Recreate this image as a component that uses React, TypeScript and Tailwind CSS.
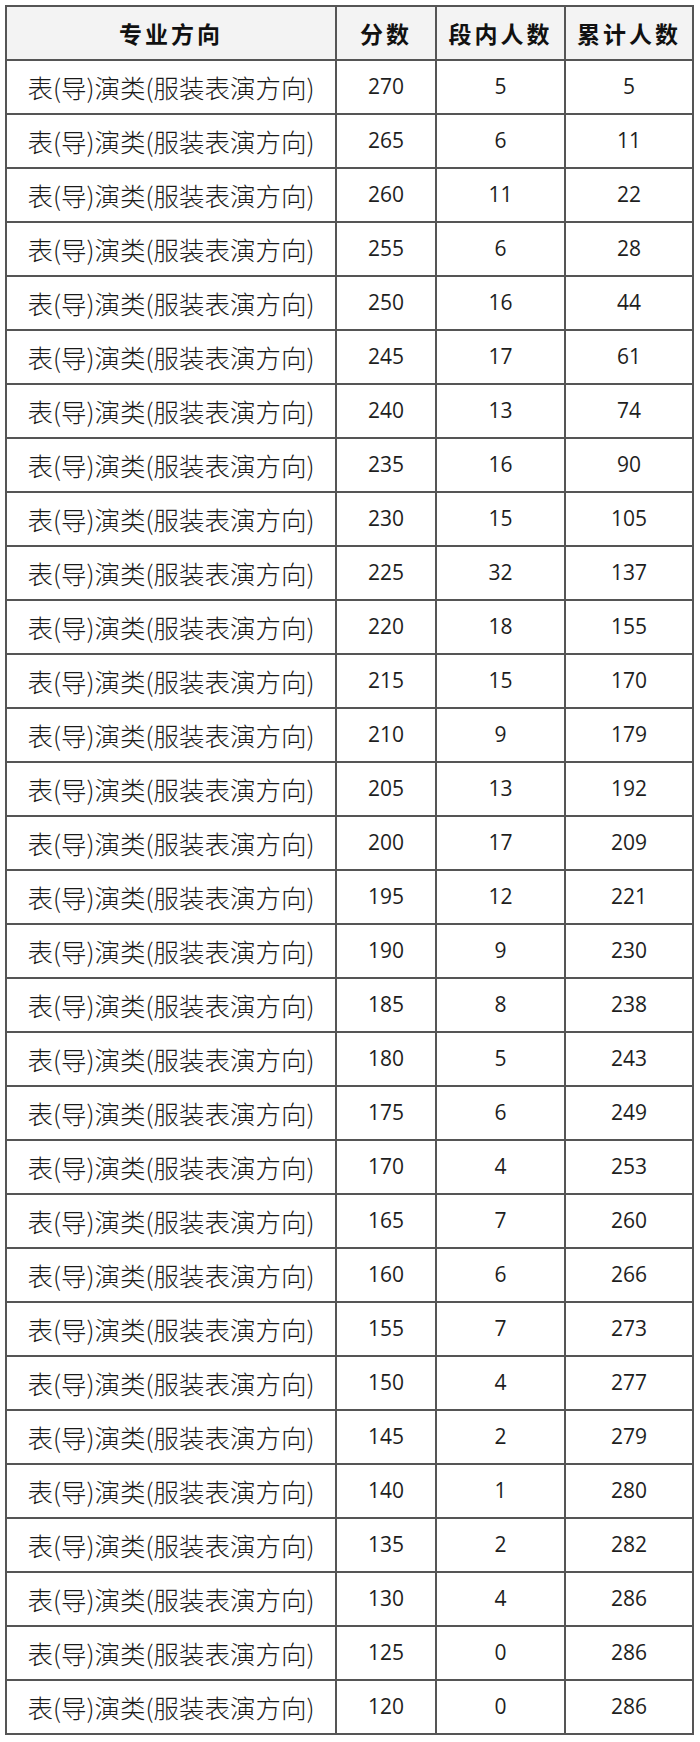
import React from "react";

const rows: [number, number, number][] = [
  [270, 5, 5],
  [265, 6, 11],
  [260, 11, 22],
  [255, 6, 28],
  [250, 16, 44],
  [245, 17, 61],
  [240, 13, 74],
  [235, 16, 90],
  [230, 15, 105],
  [225, 32, 137],
  [220, 18, 155],
  [215, 15, 170],
  [210, 9, 179],
  [205, 13, 192],
  [200, 17, 209],
  [195, 12, 221],
  [190, 9, 230],
  [185, 8, 238],
  [180, 5, 243],
  [175, 6, 249],
  [170, 4, 253],
  [165, 7, 260],
  [160, 6, 266],
  [155, 7, 273],
  [150, 4, 277],
  [145, 2, 279],
  [140, 1, 280],
  [135, 2, 282],
  [130, 4, 286],
  [125, 0, 286],
  [120, 0, 286],
];

const cjk = { fontFamily: '"Noto Sans CJK SC", "Noto Sans", sans-serif' };
const num = { fontFamily: '"Open Sans", "Noto Sans", sans-serif' };

export default function App() {
  return (
    <div className="w-[700px] h-[1742px] bg-white pt-[5px] pl-[5px]">
      <div className="w-[689px] border-2 border-[#555] flex flex-col text-[#1e1e1e]">
        <div className="flex h-[54px] border-b-2 border-[#555] bg-[#f3f3f3] font-bold text-[23px] tracking-[3px] text-[#111]" style={cjk}>
          <div className="w-[330px] border-r-2 border-[#555] flex items-center justify-center">专业方向</div>
          <div className="w-[100px] border-r-2 border-[#555] flex items-center justify-center">分数</div>
          <div className="w-[129px] border-r-2 border-[#555] flex items-center justify-center">段内人数</div>
          <div className="flex-1 flex items-center justify-center">累计人数</div>
        </div>
        {rows.map((r, i) => (
          <div
            key={i}
            className={
              i === rows.length - 1
                ? "flex h-[52px]"
                : "flex h-[54px] border-b-2 border-[#555]"
            }
          >
            <div className="w-[330px] border-r-2 border-[#555] flex items-center justify-center text-[25.5px] font-light text-[#1a1a1a]" style={cjk}>
              表(导)演类(服装表演方向)
            </div>
            <div className="w-[100px] border-r-2 border-[#555] flex items-center justify-center text-[21px]" style={num}>
              {r[0]}
            </div>
            <div className="w-[129px] border-r-2 border-[#555] flex items-center justify-center text-[21px]" style={num}>
              {r[1]}
            </div>
            <div className="flex-1 flex items-center justify-center text-[21px]" style={num}>
              {r[2]}
            </div>
          </div>
        ))}
      </div>
    </div>
  );
}
